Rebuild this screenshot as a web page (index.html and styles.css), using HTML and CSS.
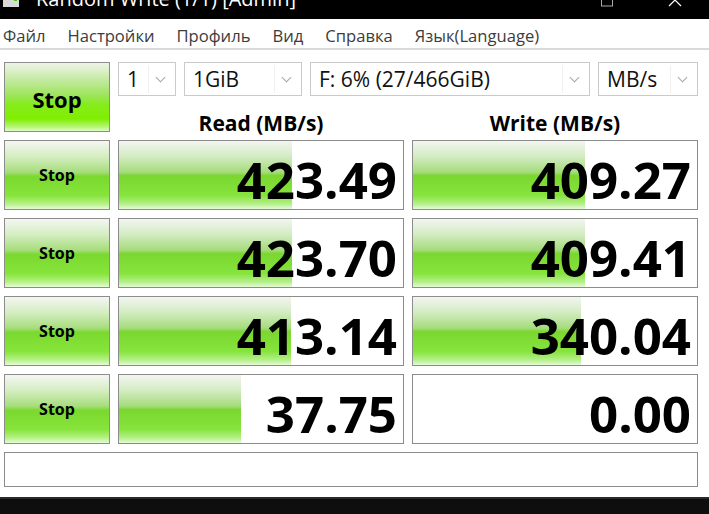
FILE: index.html
```html
<html>
   <head>
      <title>Random Write (1/1) [Admin]</title>
      <meta name="viewport" content="initial-scale=1, maximum-scale=1">
      <link rel="stylesheet" href="styles.css">
   </head>
   <body>
      <div class="titlebar">
         <svg class="appicon" width="18" height="14" viewBox="0 0 18 14">
            <rect x="1" y="0" width="16" height="12" fill="#d8d8d8"></rect>
            <rect x="12" y="3" width="3" height="3" fill="#46c81e"></rect>
         </svg>
         <span class="wintitle">Random Write (1/1) [Admin]</span>
         <div class="wincontrols">
            <svg width="16" height="10" viewBox="0 0 16 10"><rect x="2.5" y="-4" width="11" height="10" fill="none" stroke="#aaa" stroke-width="1"></rect></svg>
            <svg width="16" height="10" viewBox="0 0 16 10"><path d="M2 6 L8 0 L14 6" fill="none" stroke="#fff" stroke-width="1.2"></path></svg>
         </div>
      </div>
      <div class="menubar">
         <span>Файл</span>
         <span>Настройки</span>
         <span>Профиль</span>
         <span>Вид</span>
         <span>Справка</span>
         <span>Язык(Language)</span>
      </div>
      <div class="main">
         <button class="stop big">Stop</button>
         <div class="controls">
            <div class="combos">
               <div class="combo c-count"><span class="val">1</span><span class="arrow"></span></div>
               <div class="combo c-size"><span class="val">1GiB</span><span class="arrow"></span></div>
               <div class="combo c-drive"><span class="val">F: 6% (27/466GiB)</span><span class="arrow"></span></div>
               <div class="combo c-unit"><span class="val">MB/s</span><span class="arrow"></span></div>
            </div>
            <div class="heads">
               <div class="head">Read (MB/s)</div>
               <div class="head">Write (MB/s)</div>
            </div>
         </div>

         <button class="stop">Stop</button>
         <div class="cell"><div class="fill" style="width:173px"></div><span class="num">423.49</span></div>
         <div class="cell"><div class="fill" style="width:172px"></div><span class="num">409.27</span></div>

         <button class="stop">Stop</button>
         <div class="cell"><div class="fill" style="width:173px"></div><span class="num">423.70</span></div>
         <div class="cell"><div class="fill" style="width:172px"></div><span class="num">409.41</span></div>

         <button class="stop">Stop</button>
         <div class="cell"><div class="fill" style="width:172px"></div><span class="num">413.14</span></div>
         <div class="cell"><div class="fill" style="width:168px"></div><span class="num">340.04</span></div>

         <button class="stop">Stop</button>
         <div class="cell"><div class="fill" style="width:122px"></div><span class="num">37.75</span></div>
         <div class="cell"><div class="fill" style="width:0px"></div><span class="num">0.00</span></div>

         <div class="status"></div>
      </div>
      <div class="taskbar"></div>
   </body>
</html>
```

FILE: styles.css
```css
*{
    box-sizing: border-box;
    font-family: 'Open Sans', 'Liberation Sans', sans-serif;
}
body{
    margin: 0;
    width: 709px;
    height: 514px;
    overflow: hidden;
    background: #fff;
}
.titlebar{
    height: 19px;
    background: #000;
    position: relative;
    overflow: hidden;
    display: flex;
    align-items: flex-start;
}
.appicon{
    margin: -5px 0 0 2px;
}
.wintitle{
    color: #fff;
    font-size: 20px;
    line-height: 20px;
    margin: -11px 0 0 16px;
}
.wincontrols{
    position: absolute;
    right: 26px;
    top: 0;
    display: flex;
    gap: 52px;
}
.menubar{
    height: 31px;
    display: flex;
    align-items: center;
    gap: 22px;
    padding: 4px 0 0 3px;
    font-size: 16.6px;
    color: #3c3c3c;
    border-bottom: 2px solid #dadada;
}
.main{
    display: grid;
    grid-template-columns: 106px 286px 286px;
    grid-template-rows: 70px 70px 70px 70px 70px 35px;
    gap: 8px;
    padding: 12px 0 0 4px;
}
.stop{
    border: 1px solid #8c8c8c;
    padding: 0;
    font-weight: 700;
    font-size: 16px;
    color: #000;
    background: linear-gradient(to bottom, #f4f6f2 0%, #d6eec4 22%, #a6dd7a 46%, #7ad82e 52%, #86e43a 80%, #b4f184 92%, #e6fbd6 100%);
}
.stop.big{
    font-size: 22px;
    padding-top: 3px;
    background: linear-gradient(to bottom, #eef4e8 0%, #c4eaa0 25%, #9ce45a 48%, #86ec1e 60%, #80ee00 82%, #b6f676 94%, #e0fcc8 100%);
}
.controls{
    grid-column: 2 / 4;
    display: flex;
    flex-direction: column;
}
.combos{
    display: flex;
    gap: 8px;
    height: 35px;
}
.combo{
    display: flex;
    align-items: center;
    border: 1px solid #cacaca;
    background: #fff;
    padding: 2px;
}
.combo .val{
    flex: 1;
    height: 100%;
    display: flex;
    align-items: center;
    padding-left: 6px;
    font-size: 21px;
    color: #111;
    border-right: 1px solid #f0f0f0;
}
.combo .arrow{
    width: 24px;
    height: 100%;
    position: relative;
}
.combo .arrow::after{
    content: "";
    position: absolute;
    left: 8px;
    top: 9px;
    width: 6px;
    height: 6px;
    border-right: 1px solid #a8a8a8;
    border-bottom: 1px solid #a8a8a8;
    transform: rotate(45deg);
}
.c-count{ width: 58px; }
.c-size{ width: 118px; }
.c-drive{ width: 280px; }
.c-unit{ width: 100px; }
.heads{
    flex: 1;
    display: flex;
    gap: 8px;
}
.head{
    flex: 1;
    text-align: center;
    font-weight: 700;
    font-size: 21px;
    line-height: 21px;
    padding-top: 17px;
    color: #000;
}
.cell{
    border: 1px solid #8c8c8c;
    background: #fff;
    position: relative;
    display: flex;
    align-items: center;
    justify-content: flex-end;
    padding-right: 6px;
}
.fill{
    position: absolute;
    left: 0;
    top: 0;
    bottom: 0;
    background: linear-gradient(to bottom, #f2f5f0 0%, #d4ecc4 22%, #a4dc7a 46%, #7bd72f 51%, #86e43c 80%, #b2ef86 92%, #e4fad6 100%);
}
.num{
    position: relative;
    font-weight: 700;
    font-size: 51px;
    line-height: 51px;
    padding-top: 8px;
    color: #000;
}
.status{
    grid-column: 1 / 4;
    border: 1px solid #8c8c8c;
    background: #fff;
}
.taskbar{
    position: absolute;
    left: 0;
    right: 0;
    top: 497px;
    height: 17px;
    background: #0e0e0e;
    border-top: 2px solid #2a2a2a;
}
```
